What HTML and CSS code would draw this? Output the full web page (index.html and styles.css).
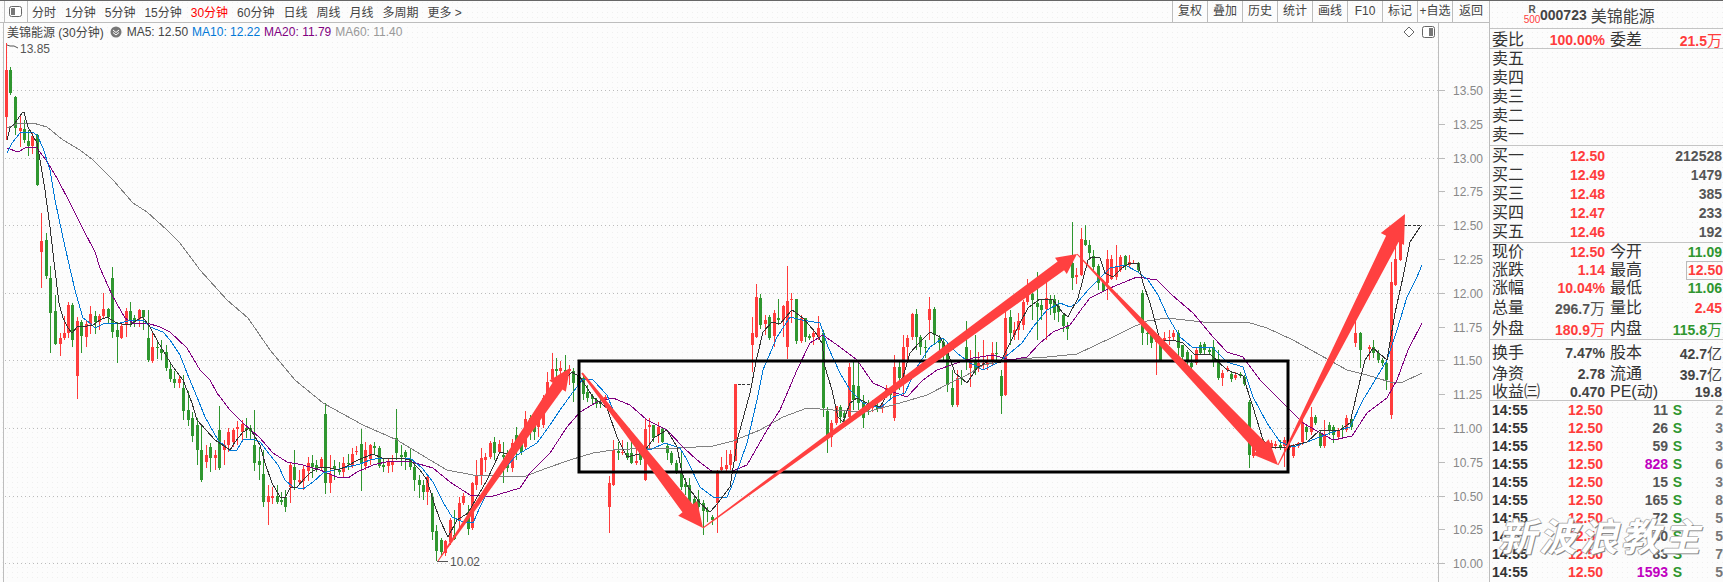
FILE: index.html
```html
<!DOCTYPE html>
<html lang="zh-CN">
<head>
    <meta charset="UTF-8">
    <title>000723 美锦能源</title>
    <link rel="stylesheet" href="styles.css">
    <script src="chart.js"></script>
</head>
<body>
    <div class="app">
        <div class="main">
            <div class="toolbar">
                <div class="periods">
                    <span class="panel-toggle">
                        <svg width="13" height="11" viewBox="0 0 13 11"><rect x="0.5" y="0.5" width="12" height="10" rx="2" fill="#fff" stroke="#666"/><rect x="2" y="2" width="4" height="7" fill="#777"/></svg>
                    </span>
                    <a>分时</a>
                    <a>1分钟</a>
                    <a>5分钟</a>
                    <a>15分钟</a>
                    <a class="active">30分钟</a>
                    <a>60分钟</a>
                    <a>日线</a>
                    <a>周线</a>
                    <a>月线</a>
                    <a>多周期</a>
                    <a>更多 &gt;</a>
                </div>
                <div class="actions">
                    <a>复权</a>
                    <a>叠加</a>
                    <a>历史</a>
                    <a>统计</a>
                    <a>画线</a>
                    <a>F10</a>
                    <a>标记</a>
                    <a>+自选</a>
                    <a class="last">返回</a>
                </div>
            </div>
            <div class="chart">
                <svg id="kline" width="1489" height="559" viewBox="0 23 1489 559"></svg>
                <div class="legend">
                    <span class="legend-name">美锦能源 (30分钟)</span>
                    <svg class="legend-icon" width="12" height="12" viewBox="0 0 12 12"><circle cx="6" cy="6" r="5.5" fill="#777"/><path d="M3 4l3 2.5L9 4M3 6.5L6 9l3-2.5" fill="none" stroke="#fff" stroke-width="1"/></svg>
                    <span class="ma5">MA5: 12.50</span>
                    <span class="ma10">MA10: 12.22</span>
                    <span class="ma20">MA20: 11.79</span>
                    <span class="ma60">MA60: 11.40</span>
                </div>
                <div class="chart-tools">
                    <svg width="12" height="12" viewBox="0 0 12 12"><path d="M6 1l5 5-5 5-5-5z" fill="#fff" stroke="#666"/></svg>
                    <svg width="13" height="12" viewBox="0 0 13 12"><rect x="0.5" y="0.5" width="12" height="11" rx="2" fill="#fff" stroke="#666"/><rect x="7" y="2" width="4" height="8" fill="#777"/></svg>
                </div>
            </div>
        </div>

        <div class="panel">
            <div class="title">
                <span class="rank"><b>R</b><i>500</i></span>
                <span class="code">000723</span>
                <span class="stock-name">美锦能源</span>
            </div>
            <div class="block bid-ratio">
                <div class="row">
                    <div class="cell"><label>委比</label><b class="up">100.00%</b></div>
                    <div class="cell"><label>委差</label><b class="up">21.5<em>万</em></b></div>
                </div>
            </div>
            <div class="block book">
                <div class="row"><label>卖五</label></div>
                <div class="row"><label>卖四</label></div>
                <div class="row"><label>卖三</label></div>
                <div class="row"><label>卖二</label></div>
                <div class="row"><label>卖一</label></div>
            </div>
            <div class="block book">
                <div class="row"><div class="cell"><label>买一</label><b class="up">12.50</b></div><div class="cell end"><b>212528</b></div></div>
                <div class="row"><div class="cell"><label>买二</label><b class="up">12.49</b></div><div class="cell end"><b>1479</b></div></div>
                <div class="row"><div class="cell"><label>买三</label><b class="up">12.48</b></div><div class="cell end"><b>385</b></div></div>
                <div class="row"><div class="cell"><label>买四</label><b class="up">12.47</b></div><div class="cell end"><b>233</b></div></div>
                <div class="row"><div class="cell"><label>买五</label><b class="up">12.46</b></div><div class="cell end"><b>192</b></div></div>
            </div>
            <div class="block book">
                <div class="row"><div class="cell"><label>现价</label><b class="up">12.50</b></div><div class="cell"><label>今开</label><b class="down">11.09</b></div></div>
                <div class="row"><div class="cell"><label>涨跌</label><b class="up">1.14</b></div><div class="cell"><label>最高</label><b class="up boxed">12.50</b></div></div>
                <div class="row"><div class="cell"><label>涨幅</label><b class="up">10.04%</b></div><div class="cell"><label>最低</label><b class="down">11.06</b></div></div>
                <div class="row"><div class="cell"><label>总量</label><b>296.7<em>万</em></b></div><div class="cell"><label>量比</label><b class="up">2.45</b></div></div>
                <div class="row"><div class="cell"><label>外盘</label><b class="up">180.9<em>万</em></b></div><div class="cell"><label>内盘</label><b class="down">115.8<em>万</em></b></div></div>
            </div>
            <div class="block finance">
                <div class="row"><div class="cell"><label>换手</label><b class="dark">7.47%</b></div><div class="cell"><label>股本</label><b class="dark">42.7<em>亿</em></b></div></div>
                <div class="row"><div class="cell"><label>净资</label><b class="dark">2.78</b></div><div class="cell"><label>流通</label><b class="dark">39.7<em>亿</em></b></div></div>
                <div class="row"><div class="cell"><label>收益㈢</label><b class="dark">0.470</b></div><div class="cell"><label>PE(动)</label><b class="dark">19.8</b></div></div>
            </div>
            <div class="ticks">
                <div class="tick"><span class="t">14:55</span><span class="p">12.50</span><span class="v">11</span><span class="s">S</span><span class="n">2</span></div>
                <div class="tick"><span class="t">14:55</span><span class="p">12.50</span><span class="v">26</span><span class="s">S</span><span class="n">3</span></div>
                <div class="tick"><span class="t">14:55</span><span class="p">12.50</span><span class="v">59</span><span class="s">S</span><span class="n">3</span></div>
                <div class="tick"><span class="t">14:55</span><span class="p">12.50</span><span class="v big">828</span><span class="s">S</span><span class="n">6</span></div>
                <div class="tick"><span class="t">14:55</span><span class="p">12.50</span><span class="v">15</span><span class="s">S</span><span class="n">3</span></div>
                <div class="tick"><span class="t">14:55</span><span class="p">12.50</span><span class="v">165</span><span class="s">S</span><span class="n">8</span></div>
                <div class="tick"><span class="t">14:55</span><span class="p">12.50</span><span class="v">72</span><span class="s">S</span><span class="n">5</span></div>
                <div class="tick"><span class="t">14:55</span><span class="p">12.50</span><span class="v">80</span><span class="s">S</span><span class="n">5</span></div>
                <div class="tick"><span class="t">14:55</span><span class="p">12.50</span><span class="v">83</span><span class="s">S</span><span class="n">7</span></div>
                <div class="tick"><span class="t">14:55</span><span class="p">12.50</span><span class="v big">1593</span><span class="s">S</span><span class="n">5</span></div>
            </div>
            <div class="watermark">新波浪教主</div>
        </div>
    </div>
</body>
</html>
```
FILE: styles.css
```css
* {
    box-sizing: border-box;
}
html, body {
    margin: 0;
    padding: 0;
}
body {
    width: 1723px;
    height: 582px;
    overflow: hidden;
    font-family: 'Liberation Sans', 'Noto Sans CJK SC', sans-serif;
    font-size: 12px;
    color: #444;
    background: radial-gradient(circle, #efefef 0.8px, transparent 1px) 0 0 / 5px 5px #fcfcfc;
}
.app {
    display: flex;
    height: 582px;
    border-top: 1px solid #666;
}
.main {
    width: 1489px;
    border-left: 0;
}
.toolbar {
    display: flex;
    justify-content: space-between;
    height: 22px;
    border-bottom: 1px solid #bdbdbd;
    padding-left: 4px;
}
.periods {
    display: flex;
    align-items: center;
    gap: 9px;
    border-left: 1px solid #bdbdbd;
    height: 21px;
}
.panel-toggle {
    display: flex;
    align-items: center;
    width: 23px;
    height: 21px;
    margin-right: -5px;
    padding-left: 4px;
    border-right: 1px solid #bdbdbd;
}
.periods a {
    white-space: nowrap;
}
.periods a.active {
    color: #f00;
}
.actions {
    display: flex;
    height: 21px;
}
.actions a {
    width: 35px;
    border-left: 1px solid #bdbdbd;
    text-align: center;
    line-height: 21px;
    white-space: nowrap;
}
.actions a.last {
    width: 37px;
}
.chart {
    position: relative;
    height: 559px;
}
#kline {
    display: block;
}
.legend {
    position: absolute;
    left: 7px;
    top: 0;
    display: flex;
    align-items: center;
    gap: 4px;
    white-space: nowrap;
}
.legend-name {
    margin-right: 2px;
}
.legend-icon {
    margin-right: 1px;
}
.ma5 { color: #444; }
.ma10 { color: #0078d7; }
.ma20 { color: #800080; }
.ma60 { color: #999; }
.chart-tools {
    position: absolute;
    right: 54px;
    top: 3px;
    display: flex;
    align-items: center;
    gap: 7px;
}

.panel {
    position: relative;
    width: 234px;
    border-left: 1px solid #bdbdbd;
    padding-left: 2px;
    font-size: 14px;
}
.panel label {
    font-size: 16px;
    line-height: 1;
    color: #333;
    white-space: nowrap;
}
.panel b {
    color: #555;
    white-space: nowrap;
}
.panel em {
    font-style: normal;
    font-weight: normal;
    font-size: 15px;
}
.panel b.up { color: #ff3c3c; }
.panel b.down { color: #2f962f; }
.panel b.dark { color: #444; }
.panel b.boxed {
    border: 1px solid #bbb;
    padding: 0 0 0 1px;
    margin-right: -2px;
    line-height: 17px;
}
.title {
    display: flex;
    align-items: center;
    height: 27px;
    padding-left: 34px;
    margin-left: -2px;
}
.rank {
    display: flex;
    flex-direction: column;
    align-items: center;
    width: 16px;
    font-size: 10px;
    line-height: 10px;
    color: #ff3c3c;
}
.rank i {
    font-style: normal;
}
.code {
    font-weight: bold;
    font-size: 14px;
    color: #444;
}
.stock-name {
    margin-left: 4px;
    font-size: 16px;
    color: #444;
}
.block {
    margin-left: -2px;
    padding-left: 2px;
    border-top: 1px solid #c4c4c4;
    display: flex;
    flex-direction: column;
}
.bid-ratio {
    height: 20px;
}
.book {
    height: 97px;
}
.finance {
    height: 61px;
    padding-top: 2px;
}
.row {
    flex: 1;
    display: grid;
    grid-template-columns: 113px 112px;
    column-gap: 5px;
    align-items: center;
}
.cell {
    display: flex;
    justify-content: space-between;
    align-items: center;
}
.cell.end {
    justify-content: flex-end;
}
.ticks {
    margin-left: -2px;
    padding-left: 2px;
    border-top: 1px solid #c4c4c4;
    font-weight: bold;
}
.tick {
    display: grid;
    grid-template-columns: 44px 67px 65px 14px 1fr;
    height: 18px;
    line-height: 18px;
}
.tick .t { color: #333; }
.tick .p { color: #ff3c3c; text-align: right; }
.tick .v { color: #555; text-align: right; }
.tick .v.big { color: #c000c0; }
.tick .s { color: #2f962f; text-align: right; }
.tick .n { color: #777; text-align: right; }
.watermark {
    position: absolute;
    left: 8px;
    top: 511px;
    font-family: 'Noto Sans CJK SC', sans-serif;
    font-size: 38px;
    font-weight: bold;
    line-height: 46px;
    font-style: italic;
    letter-spacing: 3px;
    white-space: nowrap;
    color: #fff;
    text-shadow: 1px 1px 0 #888, -1px 0 0 #aaa, 0 -1px 0 #bbb;
}
```
FILE: chart.js
```js
// 30 minute k-line: candles are [x, red?, high, top, bottom, low] in chart pixels
const candles = [
    [6,1,43,70,117,140],[10,0,67,70,93,95],[15,0,96,97,128,135],[20,1,115,128,131,147],[24,0,120,129,140,143],
    [28,0,130,141,146,156],[32,1,132,136,146,154],[37,0,134,135,185,186],[41,1,213,241,252,288],[46,0,233,240,276,279],
    [50,0,266,278,313,353],[55,0,295,311,344,345],[60,1,333,338,344,356],[64,1,316,333,338,340],[68,1,302,305,333,338],
    [72,0,303,305,340,347],[77,1,317,321,376,399],[81,0,320,322,336,353],[86,1,321,324,337,347],[90,1,306,314,324,334],
    [95,0,311,316,322,334],[99,1,314,316,322,330],[103,1,293,309,316,318],[108,0,308,309,317,324],[112,0,267,278,332,338],
    [117,0,322,330,337,363],[121,1,322,326,338,339],[126,1,308,311,324,337],[130,0,302,311,320,327],[134,0,315,318,322,327],
    [139,1,309,310,319,327],[143,0,310,310,317,330],[148,0,310,338,360,362],[152,1,332,347,361,363],[157,0,340,347,348,359],
    [161,0,340,349,353,360],[166,0,345,352,368,371],[170,0,363,369,379,382],[174,0,371,379,383,388],[179,1,375,379,383,388],
    [183,0,375,388,411,420],[188,0,391,410,420,426],[192,0,412,418,436,442],[197,0,418,425,450,465],[201,0,425,450,480,482],
    [206,1,445,455,462,468],[210,0,443,447,458,472],[215,1,450,455,458,470],[219,0,406,430,468,470],[224,1,440,445,450,465],
    [228,1,428,432,445,452],[233,1,428,430,442,447],[237,1,421,427,429,445],[242,1,420,424,432,440],[246,0,418,428,430,438],
    [250,0,425,428,431,440],[254,0,410,445,463,471],[259,0,447,461,465,480],[263,0,450,474,502,507],[268,1,485,496,502,525],
    [272,1,487,496,498,504],[277,0,485,496,502,504],[281,0,492,500,502,505],[285,0,490,497,507,512],[290,1,462,465,487,503],
    [294,0,450,467,480,490],[299,1,470,480,482,485],[303,1,465,469,481,490],[308,1,457,463,471,481],[312,0,455,463,467,478],
    [316,0,460,465,468,472],[321,1,457,459,467,470],[325,0,403,414,483,494],[330,1,455,474,483,493],[334,0,460,466,469,480],
    [339,0,462,470,472,475],[343,1,457,463,472,478],[348,0,454,463,464,470],[352,1,448,454,465,468],[356,1,446,451,452,455],
    [361,0,429,444,463,491],[365,1,442,450,466,470],[370,1,444,445,459,465],[374,0,442,446,448,455],[379,0,446,448,466,468],
    [383,0,458,465,467,472],[388,1,458,462,466,473],[392,1,455,461,465,472],[396,0,409,438,453,460],[401,0,445,455,457,466],
    [405,0,450,452,457,470],[410,0,448,460,467,470],[414,0,462,467,480,491],[419,0,475,480,485,498],[423,0,480,485,492,500],
    [427,1,476,477,492,505],[432,0,493,497,532,540],[436,0,525,531,551,561],[441,0,538,540,552,555],[445,1,540,541,553,556],
    [450,1,518,520,542,545],[454,0,510,535,539,540],[459,1,497,503,520,528],[463,1,493,496,503,505],[468,0,505,512,529,535],
    [472,1,482,483,528,530],[476,1,460,475,485,490],[481,1,448,458,475,485],[485,1,453,457,460,472],[490,1,441,443,457,459],
    [494,0,437,442,453,460],[499,1,440,444,452,454],[503,0,442,455,457,483],[507,0,450,465,468,472],[512,1,439,443,468,472],
    [516,0,427,435,450,460],[521,0,440,442,452,455],[525,1,411,419,447,450],[530,0,415,418,425,440],[534,0,415,420,432,440],
    [538,1,408,418,427,437],[543,1,395,398,425,428],[547,1,372,382,400,402],[552,1,353,369,379,380],[556,0,358,369,371,377],
    [560,1,361,368,371,375],[565,0,355,370,372,375],[569,1,365,369,371,385],[573,0,368,371,383,402],[578,0,372,375,385,390],
    [583,0,375,378,394,400],[587,0,385,392,398,402],[592,0,394,396,399,405],[596,0,398,400,404,408],[600,0,398,402,404,408],
    [605,1,395,397,400,408],[609,1,476,483,507,533],[613,1,440,450,485,486],[618,0,442,451,453,460],[622,1,440,452,453,455],
    [627,0,442,453,458,460],[631,0,440,453,463,464],[636,1,448,461,463,465],[640,0,447,453,460,465],[645,1,419,429,480,481],
    [649,1,418,425,427,450],[653,0,425,425,438,442],[658,1,422,427,435,443],[662,0,427,429,442,443],[667,0,443,446,453,460],
    [671,0,451,453,463,465],[676,0,460,463,472,474],[681,0,450,472,487,490],[685,0,478,484,487,495],[689,0,478,485,503,505],
    [694,0,495,499,508,512],[698,0,490,499,507,510],[703,0,500,503,511,535],[707,0,507,510,512,522],[712,0,515,517,520,525],
    [717,1,470,473,503,533],[721,1,457,467,470,472],[726,1,450,465,469,472],[730,1,450,454,465,470],[735,1,384,384,461,461],
    [752,1,317,333,345,372],[756,1,284,297,337,338],[760,0,294,298,325,329],[765,1,315,320,324,335],[769,0,315,317,338,340],
    [774,1,310,313,336,347],[778,0,299,318,320,325],[783,1,305,306,320,337],[787,1,266,301,347,359],[791,1,293,299,300,323],
    [796,0,299,299,341,344],[801,1,315,318,341,343],[805,0,318,318,337,342],[809,0,334,336,338,340],[813,1,330,333,337,345],
    [818,1,316,328,337,340],[823,0,330,333,408,417],[827,0,407,411,435,453],[831,1,420,423,437,447],[836,1,406,406,423,425],
    [840,0,405,407,417,423],[844,0,410,413,418,422],[849,1,363,367,417,420],[853,0,362,385,400,410],[858,0,363,386,403,410],
    [863,0,395,402,418,428],[868,0,400,407,410,415],[872,1,400,406,408,412],[877,0,402,407,409,412],[882,1,402,405,408,413],
    [886,1,385,388,393,398],[890,0,387,392,395,398],[894,1,355,367,418,421],[899,0,360,367,378,390],[903,1,335,347,380,395],
    [907,1,335,338,347,360],[912,1,313,314,337,340],[916,0,309,314,337,350],[920,0,335,337,347,355],[925,0,340,347,348,358],
    [929,1,297,309,320,340],[934,0,307,309,335,345],[939,0,335,338,343,355],[943,0,338,342,348,360],[947,0,345,353,385,392],
    [952,0,370,388,405,407],[957,1,370,378,405,407],[961,0,370,377,379,385],[966,0,321,347,360,370],[970,1,350,360,368,387],
    [975,0,335,360,370,375],[978,1,352,363,367,372],[983,1,340,363,365,370],[987,1,355,363,365,370],[992,1,342,353,360,365],
    [996,0,342,353,354,362],[1001,0,370,376,396,414],[1005,1,312,318,395,396],[1010,0,310,317,333,345],[1014,1,322,330,335,340],
    [1018,1,313,321,330,340],[1023,1,300,302,325,330],[1027,1,279,285,302,305],[1032,0,290,294,300,320],[1037,0,272,303,307,340],
    [1041,0,300,305,310,320],[1046,1,280,298,309,340],[1050,0,295,300,304,315],[1054,0,295,299,313,320],[1058,0,300,306,312,322],
    [1063,0,313,315,326,332],[1067,0,322,326,329,340],[1072,0,222,263,278,290],[1076,1,268,275,277,284],[1081,1,228,239,275,276],
    [1085,0,225,240,245,246],[1089,0,240,245,253,260],[1093,0,250,256,267,270],[1098,0,264,266,283,290],[1103,0,280,282,291,292],
    [1107,1,250,259,283,300],[1111,1,255,259,279,280],[1116,1,245,267,277,280],[1120,1,255,257,270,272],[1125,0,255,256,265,270],
    [1129,1,255,262,265,268],[1133,1,260,263,264,264],[1138,0,262,263,270,272],[1142,0,290,293,333,345],[1147,0,332,333,334,345],
    [1151,0,332,333,343,348],[1156,1,335,338,342,375],[1160,0,340,342,360,362],[1164,1,332,338,340,345],[1169,1,330,337,338,345],
    [1173,1,330,333,337,340],[1178,0,330,333,348,358],[1182,0,345,345,357,360],[1187,0,350,352,360,365],[1191,0,355,363,367,370],
    [1196,1,348,350,363,365],[1200,0,342,345,353,355],[1204,0,342,344,350,355],[1209,0,348,350,352,355],[1213,0,340,347,360,367],
    [1218,0,350,359,378,380],[1222,1,370,373,378,386],[1227,1,366,368,370,372],[1231,0,372,374,379,382],[1235,1,372,375,378,380],
    [1240,0,372,374,376,378],[1244,0,375,377,384,386],[1249,0,400,402,455,468],[1253,1,440,445,456,458],[1258,1,440,443,444,447],
    [1262,0,437,439,443,445],[1267,0,442,446,448,450],[1271,1,440,443,448,449],[1275,1,441,444,446,449],[1280,0,440,445,448,450],
    [1284,1,437,440,446,467],[1289,1,442,445,448,450],[1293,1,444,445,456,458],[1298,1,442,443,446,448],[1302,1,415,422,442,445],
    [1306,0,425,427,432,440],[1311,1,407,417,432,435],[1315,0,415,417,423,425],[1320,0,430,433,446,448],[1324,1,420,435,446,448],
    [1329,0,422,425,430,435],[1333,0,425,427,435,443],[1338,1,428,430,437,440],[1342,0,425,428,430,437],[1346,1,415,418,430,432],
    [1351,0,418,419,427,430],[1355,1,303,333,343,347],[1360,0,332,333,350,368],[1369,1,345,347,349,360],[1373,0,340,347,353,358],
    [1378,0,350,353,360,363],[1382,0,358,360,363,366],[1386,0,360,363,380,390],[1391,1,262,282,415,419],[1395,1,240,259,285,286],
    [1400,1,230,233,260,261]
];

// limit-up bars with no range, drawn as short dashes
const dashes = [[739,384],[743,384],[748,384],[1405,225],[1409,225],[1414,225],[1418,225]];

const ma5 = [[7,140],[10,128],[15,123],[22,113],[24,112],[28,127],[37,143],[40,160],[45,190],[50,227],[55,270],[59,303],[63,318],[68,328],[72,333],[77,327],[87,326],[93,325],[100,320],[107,317],[112,320],[117,323],[122,324],[130,325],[137,320],[142,317],[145,320],[150,327],[158,342],[167,357],[173,367],[183,380],[192,403],[197,420],[215,440],[230,450],[235,442],[243,432],[250,428],[255,437],[260,445],[265,463],[272,483],[280,497],[285,498],[290,488],[297,487],[305,478],[310,473],[320,467],[330,468],[338,470],[347,466],[358,460],[368,456],[373,454],[382,458],[390,459],[400,458],[410,460],[420,470],[427,480],[433,500],[440,520],[448,537],[457,520],[468,513],[487,480],[500,452],[513,455],[523,443],[537,420],[550,403],[560,383],[572,372],[580,377],[593,397],[607,408],[617,437],[627,457],[643,453],[655,437],[667,430],[677,447],[682,473],[688,487],[700,503],[710,512],[718,503],[730,487],[738,437],[750,393],[757,357],[763,332],[772,322],[780,324],[792,310],[803,318],[815,332],[822,343],[825,367],[832,390],[838,417],[843,422],[850,403],[857,398],[867,403],[880,407],[888,393],[897,387],[903,377],[910,353],[920,342],[930,332],[940,337],[948,353],[955,373],[967,383],[977,368],[990,360],[1000,363],[1008,347],[1020,323],[1028,308],[1040,299],[1053,300],[1062,312],[1068,317],[1078,298],[1088,260],[1092,257],[1100,258],[1105,273],[1113,277],[1122,268],[1130,263],[1138,263],[1143,283],[1150,303],[1160,340],[1173,340],[1183,343],[1195,355],[1210,354],[1227,370],[1243,376],[1253,407],[1263,440],[1270,448],[1287,447],[1307,442],[1320,430],[1340,430],[1350,423],[1357,393],[1365,360],[1373,348],[1387,360],[1395,313],[1403,277],[1410,242],[1420,227],[1422,225]];

const ma10 = [[7,153],[12,143],[20,133],[32,132],[37,135],[43,148],[50,170],[55,200],[62,233],[68,260],[75,290],[83,318],[90,323],[95,328],[103,324],[112,323],[120,323],[128,321],[143,320],[150,327],[163,332],[170,340],[180,355],[187,373],[197,397],[205,417],[218,440],[230,451],[237,450],[243,440],[253,439],[260,442],[270,455],[278,465],[285,480],[293,487],[303,489],[313,482],[323,473],[330,471],[343,468],[360,464],[370,460],[380,458],[410,458],[422,468],[433,482],[443,502],[452,517],[463,522],[473,523],[480,507],[490,487],[503,470],[517,455],[537,443],[550,425],[560,410],[573,392],[583,379],[593,380],[607,395],[613,410],[627,427],[643,448],[650,450],[665,443],[680,448],[687,460],[700,487],[713,497],[727,497],[733,483],[747,443],[757,400],[763,370],[777,337],[790,317],[802,320],[820,323],[828,347],[840,373],[850,390],[863,403],[880,408],[893,397],[905,393],[917,367],[930,347],[943,338],[957,353],[970,363],[983,370],[997,363],[1010,353],[1022,343],[1033,327],[1047,310],[1060,303],[1070,307],[1077,303],[1088,290],[1100,278],[1110,268],[1125,265],[1138,272],[1148,280],[1158,295],[1168,317],[1180,337],[1192,347],[1213,348],[1227,362],[1243,367],[1253,397],[1267,423],[1280,442],[1293,447],[1307,442],[1320,437],[1333,432],[1350,427],[1363,400],[1377,377],[1387,360],[1397,330],[1407,297],[1417,277],[1422,265]];

const ma20 = [[7,148],[18,152],[27,147],[37,148],[48,163],[58,180],[70,203],[82,227],[95,252],[100,268],[112,295],[125,318],[133,323],[147,323],[160,327],[170,332],[187,348],[200,370],[210,380],[217,393],[230,410],[243,423],[260,438],[273,453],[287,462],[303,465],[320,470],[337,477],[348,478],[357,472],[373,465],[390,461],[412,462],[433,468],[450,482],[470,495],[490,497],[520,488],[530,473],[550,453],[567,427],[580,412],[597,402],[613,398],[630,405],[647,420],[667,430],[683,447],[697,460],[713,472],[730,472],[747,465],[767,430],[780,410],[797,370],[810,343],[823,335],[840,347],[857,360],[873,383],[893,392],[907,397],[923,380],[937,370],[957,363],[973,358],[993,355],[1010,360],[1027,357],[1040,343],[1053,332],[1070,325],[1083,307],[1090,298],[1110,288],[1137,277],[1157,280],[1172,295],[1193,313],[1213,337],[1227,352],[1243,357],[1260,380],[1287,407],[1303,423],[1333,440],[1352,436],[1367,413],[1387,398],[1397,380],[1408,350],[1422,323]];

const ma60 = [[7,128],[20,123],[33,123],[47,127],[63,140],[80,150],[93,160],[113,180],[133,203],[147,212],[167,230],[180,243],[200,270],[227,300],[248,318],[270,350],[295,380],[323,403],[363,425],[397,440],[430,460],[447,470],[473,475],[523,477],[547,468],[570,460],[593,453],[613,450],[647,448],[680,448],[713,446],[733,441],[760,430],[783,417],[807,408],[833,410],[867,412],[900,403],[927,395],[950,383],[967,375],[983,365],[1017,359],[1047,357],[1077,354],[1113,337],[1133,327],[1147,321],[1167,318],[1203,322],[1247,322],[1267,328],[1293,340],[1320,355],[1347,370],[1367,375],[1390,382],[1403,382],[1422,373]];

// red hand-drawn arrows: from, to, start width, end width, head width, head length
const arrows = [
    [438,561,570,368,1,12,20,22],
    [582,373,703,528,2,13,24,25],
    [703,528,1077,254,1,11,20,20],
    [1077,254,1278,465,1,13,22,25],
    [1278,465,1405,214,1,14,26,28]
];

const priceY = p => 90 + (13.5 - p) * 135.2;

function el(name, attrs, text) {
    const node = document.createElementNS('http://www.w3.org/2000/svg', name);
    for (const key in attrs) node.setAttribute(key, attrs[key]);
    if (text) node.textContent = text;
    return node;
}

function arrowPoints(a) {
    const [x0, y0, x1, y1, w0, w1, hw, hl] = a;
    const len = Math.hypot(x1 - x0, y1 - y0);
    const ux = (x1 - x0) / len, uy = (y1 - y0) / len;
    const nx = -uy, ny = ux;
    const bx = x1 - ux * hl, by = y1 - uy * hl;
    const pts = [
        [x0 + nx * w0 / 2, y0 + ny * w0 / 2],
        [bx + nx * w1 / 2, by + ny * w1 / 2],
        [bx + nx * hw / 2, by + ny * hw / 2],
        [x1, y1],
        [bx - nx * hw / 2, by - ny * hw / 2],
        [bx - nx * w1 / 2, by - ny * w1 / 2],
        [x0 - nx * w0 / 2, y0 - ny * w0 / 2]
    ];
    return pts.map(p => p[0].toFixed(1) + ',' + p[1].toFixed(1)).join(' ');
}

document.addEventListener('DOMContentLoaded', function() {
    const svg = document.getElementById('kline');

    svg.appendChild(el('line', {x1: 3.5, y1: 23, x2: 3.5, y2: 582, stroke: '#bdbdbd'}));
    svg.appendChild(el('line', {x1: 1438.5, y1: 23, x2: 1438.5, y2: 582, stroke: '#bdbdbd'}));

    // grid every 0.50, axis tick every 0.25
    for (let p = 13.5; p >= 10; p -= 0.25) {
        const y = Math.round(priceY(p)) + 0.5;
        if ((p * 2) % 1 === 0) {
            svg.appendChild(el('line', {x1: 5, y1: y, x2: 1438, y2: y, stroke: '#bbb', 'stroke-dasharray': '1 3'}));
        }
        svg.appendChild(el('line', {x1: 1439, y1: y, x2: 1445, y2: y, stroke: '#bbb'}));
        svg.appendChild(el('text', {x: 1453, y: y + 4, fill: '#888', 'font-size': 12}, p.toFixed(2)));
    }

    candles.forEach(c => {
        const color = c[1] ? '#ff3c3c' : '#2f962f';
        svg.appendChild(el('rect', {x: c[0], y: c[2], width: 1, height: c[5] - c[2], fill: color, 'shape-rendering': 'crispEdges'}));
        svg.appendChild(el('rect', {x: c[0] - 1, y: c[3], width: 3, height: Math.max(c[4] - c[3], 1), fill: color, 'shape-rendering': 'crispEdges'}));
    });
    dashes.forEach(d => {
        svg.appendChild(el('rect', {x: d[0] - 1, y: d[1], width: 3, height: 1, fill: '#333'}));
    });

    [[ma60, '#808080'], [ma20, '#800080'], [ma10, '#0078d7'], [ma5, '#333']].forEach(m => {
        svg.appendChild(el('polyline', {points: m[0].join(' '), fill: 'none', stroke: m[1], 'stroke-width': 1, 'stroke-linejoin': 'round', 'shape-rendering': 'crispEdges'}));
    });

    // high and low labels
    svg.appendChild(el('polyline', {points: '7,45 10,46 14,46 18,48', fill: 'none', stroke: '#555'}));
    svg.appendChild(el('text', {x: 20, y: 53, fill: '#555', 'font-size': 12}, '13.85'));
    svg.appendChild(el('line', {x1: 437, y1: 561.5, x2: 448, y2: 561.5, stroke: '#555'}));
    svg.appendChild(el('text', {x: 450, y: 566, fill: '#555', 'font-size': 12}, '10.02'));

    svg.appendChild(el('rect', {x: 579, y: 361, width: 709, height: 111, fill: 'none', stroke: '#000', 'stroke-width': 3}));

    arrows.forEach(a => {
        svg.appendChild(el('polygon', {points: arrowPoints(a), fill: '#ff4040'}));
    });
});
```
